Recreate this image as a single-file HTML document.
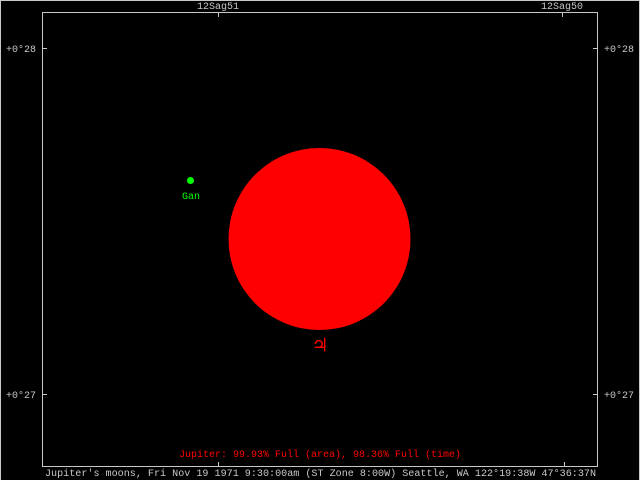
<!DOCTYPE html>
<html><head><style>
body{margin:0;background:#000;}
svg{display:block}
text{font-family:"Liberation Mono",monospace;font-size:10px;}
</style></head><body>
<svg width="640" height="480" xmlns="http://www.w3.org/2000/svg">
<rect width="640" height="480" fill="#000"/>
<g stroke="#c8c8c8" stroke-width="1" fill="none">
<path d="M0.5 0V480M0 0.5H640M639.5 0V480"/>
<rect x="42.5" y="12.5" width="555" height="454"/>
<path d="M218.5 13V17M562.5 13V17M218.5 466V462M564.5 466V462M43 48.5H47M43 394.5H47M593 48.5H597M593 394.5H597"/>
</g>
<g fill="#c8c8c8">
<text x="218" y="9" text-anchor="middle">12Sag51</text>
<text x="562" y="9" text-anchor="middle">12Sag50</text>
<text x="6" y="52">+0°28</text>
<text x="6" y="398">+0°27</text>
<text x="604" y="52">+0°28</text>
<text x="604" y="398">+0°27</text>
<text x="45" y="476" textLength="551" lengthAdjust="spacingAndGlyphs">Jupiter's moons, Fri Nov 19 1971  9:30:00am (ST Zone 8:00W) Seattle, WA 122°19:38W 47°36:37N</text>
</g>
<circle cx="319.5" cy="239" r="91" fill="#f00"/>
<text x="320" y="352" fill="#f00" text-anchor="middle" style="font-size:20px">♃</text>
<text x="320" y="457" fill="#f00" text-anchor="middle">Jupiter: 99.93% Full (area), 98.36% Full (time)</text>
<circle cx="190.5" cy="180.5" r="3.5" fill="#0f0"/>
<text x="191" y="199" fill="#0f0" text-anchor="middle">Gan</text>
</svg>
</body></html>
